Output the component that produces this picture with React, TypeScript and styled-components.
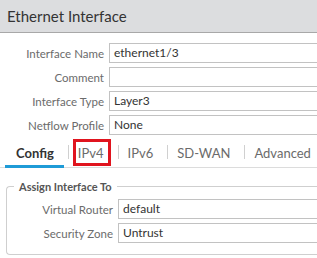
import React from "react";
import styled, { createGlobalStyle } from "styled-components";

const Global = createGlobalStyle`
  html, body { margin: 0; padding: 0; background: #fff; overflow: hidden; }
  body { font-family: Lato, "Open Sans", sans-serif; width: 317px; height: 258px; }
`;

const Header = styled.div`
  height: 32px;
  line-height: 32px;
  background: #dcdddf;
  border-bottom: 1px solid #a8a8a8;
  padding-left: 7px;
  font-size: 15px;
  color: #333;
`;

const Form = styled.div`
  display: flex;
  flex-direction: column;
  gap: 4px;
  padding-top: 10px;
`;

const Row = styled.div<{ $labelWidth: number }>`
  display: grid;
  grid-template-columns: ${(p) => p.$labelWidth}px 1fr;
  column-gap: 5px;
  align-items: center;
  height: 20px;
`;

const Label = styled.div`
  text-align: right;
  font-size: 11.5px;
  color: #6b6b6b;
  white-space: nowrap;
`;

const Input = styled.div`
  height: 18px;
  line-height: 18px;
  border: 1px solid #c2c2c2;
  border-right: none;
  padding-left: 4px;
  font-size: 12px;
  color: #333;
  white-space: nowrap;
`;

const Tabs = styled.div`
  display: flex;
  align-items: center;
  height: 30px;
  margin-top: 2px;
  border-bottom: 1px solid #dcdcdc;
  padding-left: 5px;
  white-space: nowrap;
`;

const Tab = styled.div<{ $active?: boolean }>`
  flex-shrink: 0;
  height: 100%;
  display: flex;
  align-items: center;
  padding: 0 10px 0 ${(p) => (p.$active ? "11px" : "9px")};
  font-size: 13px;
  font-weight: ${(p) => (p.$active ? 700 : 400)};
  color: ${(p) => (p.$active ? "#333" : "#6b6b6b")};
  box-shadow: ${(p) => (p.$active ? "inset 0 -3px 0 #1f9bd7" : "none")};
  margin-bottom: -1px;
`;

const Marked = styled.span`
  position: relative;
`;

const Highlight = styled.span`
  position: absolute;
  left: -5px;
  right: -7px;
  top: -6px;
  bottom: -5px;
  border: 3px solid #e0141e;
`;

const Sep = styled.div`
  flex-shrink: 0;
  width: 1px;
  height: 14px;
  margin-left: 4px;
  background: #d0d0d0;
`;

const Fieldset = styled.fieldset`
  margin: 12px 0 0 6px;
  padding: 6px 0 11px 0;
  border: 1px solid #cfcfcf;
  border-right: none;
  border-radius: 4px 0 0 4px;
  display: flex;
  flex-direction: column;
  gap: 4px;
`;

const Legend = styled.legend`
  margin-left: 7px;
  padding: 0 5px;
  font-size: 11px;
  font-weight: 700;
  color: #555;
`;

export default function App() {
  const fields: [string, string][] = [
    ["Interface Name", "ethernet1/3"],
    ["Comment", ""],
    ["Interface Type", "Layer3"],
    ["Netflow Profile", "None"],
  ];
  return (
    <>
      <Global />
      <Header>Ethernet Interface</Header>
      <Form>
        {fields.map(([l, v]) => (
          <Row key={l} $labelWidth={104}>
            <Label>{l}</Label>
            <Input>{v}</Input>
          </Row>
        ))}
      </Form>
      <Tabs>
        <Tab $active>Config</Tab>
        <Sep />
        <Tab>
          <Marked>
            IPv4
            <Highlight />
          </Marked>
        </Tab>
        <Sep />
        <Tab>IPv6</Tab>
        <Sep />
        <Tab>SD-WAN</Tab>
        <Sep />
        <Tab>Advanced</Tab>
      </Tabs>
      <Fieldset>
        <Legend>Assign Interface To</Legend>
        <Row $labelWidth={106}>
          <Label>Virtual Router</Label>
          <Input>default</Input>
        </Row>
        <Row $labelWidth={106}>
          <Label>Security Zone</Label>
          <Input>Untrust</Input>
        </Row>
      </Fieldset>
    </>
  );
}
